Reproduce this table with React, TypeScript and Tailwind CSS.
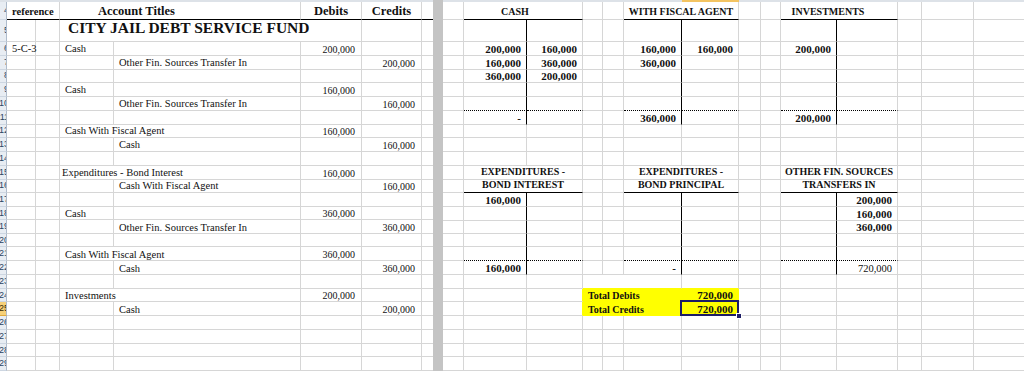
import React from 'react';

// gridline / border styles for one cell edge
type Edge = 'g' | 'k' | 'd' | 'y' | 'n';

interface CellDef {
  t?: React.ReactNode;
  cls?: string;
  span?: 1 | 2 | 3;
  r?: Edge;
  b?: Edge;
  sel?: boolean;
}

type RowDef = Record<string, CellDef>;

const RIGHT_EDGE: Record<Edge, string> = {
  g: 'border-r border-r-[#d6d6d6]',
  k: 'border-r border-r-black',
  d: 'border-r border-r-black [border-right-style:dotted]',
  y: 'border-r border-r-[#ffff00]',
  n: '',
};

const BOTTOM_EDGE: Record<Edge, string> = {
  g: 'border-b border-b-[#d6d6d6]',
  k: 'border-b border-b-black',
  d: 'border-b border-b-black [border-bottom-style:dotted]',
  y: 'border-b border-b-[#ffff00]',
  n: '',
};

const SPAN = { 1: '', 2: 'col-span-2', 3: 'col-span-3' };

const HEIGHTS = [
  'h-[18px]',
  'h-[22px]',
  ...Array.from({ length: 6 }).flatMap(() => ['h-[14px]', 'h-[14px]', 'h-[13px]', 'h-[14px]']),
];

const LEFT_COLS = ['A', 'B', 'C', 'D', 'E', 'F', 'G'];
const RIGHT_COLS = ['H', 'I', 'J', 'K', 'L', 'M', 'N', 'O', 'P', 'Q', 'R', 'S', 'T', 'U'];

const LEFT_TMPL = 'grid grid-cols-[29px_24px_54px_187px_61px_60px_11px]';
const RIGHT_TMPL = 'grid grid-cols-[21px_63px_56px_20px_21px_58px_57px_22px_20px_56px_61px_24px_52px_50px]';

// --- left pane (journal entries) ---
const amt = 'justify-end pr-[6px] text-[10px]';
const hd = 'font-bold text-[12.5px] pb-[1px]';

const main = (label: string, debit: string, pl = 'pl-[5px]', long = true): RowDef => ({
  C: { t: label, cls: pl, r: long ? 'n' : 'g' },
  E: { t: debit, cls: amt },
});

const sub = (label: string, credit: string): RowDef => ({
  D: { t: label, cls: 'pl-[5px]' },
  F: { t: credit, cls: amt },
});

const leftRows: RowDef[] = [
  {
    A: { t: 'reference', cls: 'pl-[5px] font-bold text-[10.5px] pb-[1px]', r: 'n', b: 'k' },
    B: { b: 'k' },
    C: { t: 'Account Titles', cls: `${hd} pl-[38px]`, r: 'n', b: 'k' },
    D: { b: 'k' },
    E: { t: 'Debits', cls: `${hd} justify-center`, b: 'k' },
    F: { t: 'Credits', cls: `${hd} justify-center`, b: 'k' },
    G: { b: 'k' },
  },
  {
    C: { t: 'CITY JAIL DEBT SERVICE FUND', cls: 'pl-[8px] pb-[5px] font-bold text-[15.5px]', r: 'n' },
    D: { r: 'n' },
  },
  { A: { t: '5-C-3', cls: 'pl-[5px]' }, ...main('Cash', '200,000', 'pl-[5px]', false) },
  sub('Other Fin. Sources Transfer In', '200,000'),
  {},
  main('Cash', '160,000', 'pl-[5px]', false),
  sub('Other Fin. Sources Transfer In', '160,000'),
  {},
  main('Cash With Fiscal Agent', '160,000'),
  sub('Cash', '160,000'),
  {},
  main('Expenditures - Bond Interest', '160,000', 'pl-[2px]'),
  sub('Cash With Fiscal Agent', '160,000'),
  {},
  main('Cash', '360,000', 'pl-[5px]', false),
  sub('Other Fin. Sources Transfer In', '360,000'),
  {},
  main('Cash With Fiscal Agent', '360,000'),
  sub('Cash', '360,000'),
  {},
  main('Investments', '200,000'),
  sub('Cash', '200,000'),
  {},
  {},
  {},
  {},
];

// --- right pane (T-accounts) ---
const val = 'justify-end pr-[5px] font-bold text-[11px]';
const th = 'justify-center font-bold text-[10px] pb-[2px]';
const yel = 'bg-[#ffff00]';

const stem: RowDef = { I: { r: 'k' }, M: { r: 'k' }, Q: { r: 'k' } };
const dotted: RowDef = {
  I: { r: 'k', b: 'd' },
  J: { b: 'd' },
  M: { r: 'k', b: 'd' },
  N: { b: 'd' },
  Q: { r: 'k', b: 'd' },
  R: { b: 'd' },
};

const rightRows: RowDef[] = [
  {
    I: { span: 2, t: 'CASH', cls: `${th} pr-[16px]`, b: 'k' },
    M: { span: 2, t: 'WITH FISCAL AGENT', cls: th, b: 'k' },
    Q: { span: 2, t: 'INVESTMENTS', cls: `${th} pr-[22px]`, b: 'k' },
  },
  stem,
  {
    I: { t: '200,000', cls: val, r: 'k' },
    J: { t: '160,000', cls: val },
    M: { t: '160,000', cls: val, r: 'k' },
    N: { t: '160,000', cls: val },
    Q: { t: '200,000', cls: val, r: 'k' },
  },
  {
    I: { t: '160,000', cls: val, r: 'k' },
    J: { t: '360,000', cls: val },
    M: { t: '360,000', cls: val, r: 'k' },
    Q: { r: 'k' },
  },
  {
    I: { t: '360,000', cls: val, r: 'k' },
    J: { t: '200,000', cls: val },
    M: { r: 'k' },
    Q: { r: 'k' },
  },
  stem,
  dotted,
  {
    I: { t: '-', cls: val, r: 'k' },
    M: { t: '360,000', cls: val, r: 'k' },
    Q: { t: '200,000', cls: val, r: 'k' },
  },
  {},
  {},
  {},
  {
    I: { span: 2, t: 'EXPENDITURES -', cls: th },
    M: { span: 2, t: 'EXPENDITURES -', cls: th },
    Q: { span: 2, t: 'OTHER FIN. SOURCES', cls: th },
  },
  {
    I: { span: 2, t: 'BOND INTEREST', cls: th, b: 'k' },
    M: { span: 2, t: 'BOND PRINCIPAL', cls: th, b: 'k' },
    Q: { span: 2, t: 'TRANSFERS IN', cls: th, b: 'k' },
  },
  { ...stem, I: { t: '160,000', cls: val, r: 'k' }, R: { t: '200,000', cls: val } },
  { ...stem, R: { t: '160,000', cls: val } },
  { ...stem, R: { t: '360,000', cls: val } },
  stem,
  dotted,
  {
    I: { t: '160,000', cls: val, r: 'k' },
    M: { t: '-', cls: val, r: 'k' },
    Q: { r: 'k' },
    R: { t: '720,000', cls: 'justify-end pr-[5px] text-[10.5px]' },
  },
  { K: { span: 3, b: 'y' }, N: { b: 'y' } },
  {
    J: { r: 'y' },
    K: { span: 3, t: 'Total Debits', cls: `${yel} pl-[5px] font-bold text-[10px]`, r: 'y', b: 'y' },
    N: { t: '720,000', cls: `${yel} ${val}`, r: 'y', b: 'y' },
  },
  {
    J: { r: 'y' },
    K: { span: 3, t: 'Total Credits', cls: `${yel} pl-[5px] font-bold text-[10px]`, r: 'y', b: 'y' },
    N: { t: '720,000', cls: `${yel} ${val} relative`, r: 'y', b: 'y', sel: true },
  },
  {},
  {},
  {},
  {},
];

function SheetRow({ cols, tmpl, def, height }: { cols: string[]; tmpl: string; def: RowDef; height: string }) {
  const cells: React.ReactNode[] = [];
  for (let i = 0; i < cols.length; i++) {
    const c = def[cols[i]] ?? {};
    const span = c.span ?? 1;
    const last = i + span >= cols.length;
    cells.push(
      <div
        key={cols[i]}
        className={`flex items-end whitespace-nowrap leading-none ${SPAN[span]} ${RIGHT_EDGE[c.r ?? (last ? 'n' : 'g')]} ${BOTTOM_EDGE[c.b ?? 'g']} ${c.cls ?? ''}`}
      >
        {c.t}
        {c.sel && (
          <>
            <div className="absolute -left-[2px] -top-[2px] -right-[1px] -bottom-[1px] border-2 border-[#1d1d66]" />
            <div className="absolute -right-[4px] -bottom-[4px] w-[6px] h-[6px] bg-[#1d1d66] border border-white" />
          </>
        )}
      </div>
    );
    i += span - 1;
  }
  return <div className={`${tmpl} ${height}`}>{cells}</div>;
}

function RowHeaders() {
  return (
    <div className="flex flex-col w-[7px] shrink-0 [font-family:'Liberation_Sans',sans-serif]">
      <div className="h-[2px] bg-[#dde2e8]" />
      {HEIGHTS.map((h, i) => (
        <div
          key={i}
          className={`${h} flex items-center justify-end overflow-hidden border-r border-r-[#aebbcb] border-b text-[9px] leading-none ${
            i === 21 ? 'bg-[#f6d078] border-b-[#e0a93c] text-[#3b2a05]' : 'bg-[#e8edf3] border-b-[#cdd6e1] text-[#2b4462]'
          }`}
        >
          <span className="-mr-[3px]">{i + 4}</span>
        </div>
      ))}
    </div>
  );
}

export default function App() {
  return (
    <div className="flex w-[1024px] h-[371px] overflow-hidden bg-white text-[#111] [font-family:'Liberation_Serif','Times_New_Roman',serif]">
      <RowHeaders />

      {/* Left pane: journal */}
      <div className="flex flex-col w-[426px] shrink-0 text-[10.5px]">
        <div className="h-[2px] bg-[#dde2e8]" />
        {leftRows.map((def, i) => (
          <SheetRow key={i} cols={LEFT_COLS} tmpl={LEFT_TMPL} def={def} height={HEIGHTS[i]} />
        ))}
      </div>

      {/* split bar */}
      <div className="w-[10px] shrink-0 bg-[#c4c4c4]" />

      {/* Right pane: T-accounts */}
      <div className="flex flex-col w-[581px] shrink-0 text-[10.5px]">
        <div className={`${RIGHT_TMPL} h-[2px]`}>
          {RIGHT_COLS.map((c) => (
            <div key={c} className={c === 'N' ? 'bg-[#f3c462]' : 'bg-[#dde2e8]'} />
          ))}
        </div>
        {rightRows.map((def, i) => (
          <SheetRow key={i} cols={RIGHT_COLS} tmpl={RIGHT_TMPL} def={def} height={HEIGHTS[i]} />
        ))}
      </div>
    </div>
  );
}
